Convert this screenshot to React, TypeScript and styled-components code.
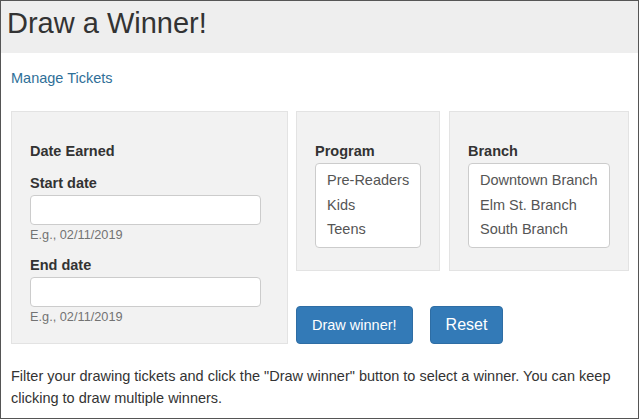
import React, { FC } from "react";
import styled, { createGlobalStyle } from "styled-components";

const GlobalStyle = createGlobalStyle`
  body {
    margin: 0;
    background: #fff;
    font-family: "Liberation Sans", Arial, sans-serif;
    color: #333;
  }
`;

const Frame = styled.div`
  box-sizing: border-box;
  width: 639px;
  height: 419px;
  border: 1px solid #555;
  overflow: hidden;
`;

const Header = styled.header`
  height: 52px;
  box-sizing: border-box;
  padding: 6px 0 0 6px;
  background: #eee;
`;

const Title = styled.h1`
  margin: 0;
  font-size: 29px;
  font-weight: normal;
  line-height: 32px;
  color: #333;
`;

const Body = styled.div`
  padding: 15px 0 0 10px;
`;

const TopLink = styled.a`
  display: block;
  font-size: 14.5px;
  line-height: 20px;
  color: #2f6f98;
  text-decoration: none;
`;

const Filters = styled.div`
  display: flex;
  align-items: flex-start;
  gap: 8px;
  margin-top: 23px;
`;

const Panel = styled.div<{ $width: number; $bottom?: number }>`
  box-sizing: border-box;
  flex-shrink: 0;
  width: ${(p) => p.$width}px;
  padding: 29px 18px ${(p) => p.$bottom ?? 22}px 18px;
  background: #f2f2f2;
  border: 1px solid #e3e3e3;
`;

const Column = styled.div`
  display: flex;
  flex-direction: column;
  gap: 35px;
`;

const PanelRow = styled.div`
  display: flex;
  gap: 9px;
`;

const Label = styled.div<{ $top?: number }>`
  font-size: 14.5px;
  font-weight: bold;
  line-height: 20px;
  margin-top: ${(p) => p.$top ?? 0}px;
  color: #333;
`;

const DateInput = styled.input`
  display: block;
  box-sizing: border-box;
  width: 231px;
  height: 30px;
  margin-top: 2px;
  background: #fff;
  border: 1px solid #ccc;
  border-radius: 4px;
`;

const Hint = styled.div`
  font-size: 12.75px;
  line-height: 16px;
  margin-top: 2px;
  color: #737373;
`;

const ListBox = styled.div<{ $width: number }>`
  box-sizing: border-box;
  width: ${(p) => p.$width}px;
  height: 85px;
  margin-top: 2px;
  padding: 4px 11px;
  background: #fff;
  border: 1px solid #ccc;
  border-radius: 4px;
`;

const Option = styled.div`
  font-size: 14.5px;
  line-height: 24.5px;
  color: #555;
  white-space: nowrap;
`;

const Buttons = styled.div`
  display: flex;
  gap: 17px;
`;

const Button = styled.button<{ $size?: number }>`
  height: 38px;
  padding: 0 15px;
  font-family: "Liberation Sans", Arial, sans-serif;
  font-size: ${(p) => p.$size ?? 14.5}px;
  color: #fff;
  background: #337ab7;
  border: 1px solid #2e6da4;
  border-radius: 4px;
`;

const Note = styled.p`
  margin: 21px 0 0 0;
  font-size: 14.5px;
  line-height: 22px;
  color: #333;
`;

const SelectList: FC<{ label: string; items: string[]; width: number; boxWidth: number }> = ({
  label,
  items,
  width,
  boxWidth,
}) => (
  <Panel $width={width}>
    <Label>{label}</Label>
    <ListBox $width={boxWidth}>
      {items.map((item) => (
        <Option key={item}>{item}</Option>
      ))}
    </ListBox>
  </Panel>
);

const App: FC = () => (
  <>
    <GlobalStyle />
    <Frame>
      <Header>
        <Title>Draw a Winner!</Title>
      </Header>
      <Body>
        <TopLink href="#">Manage Tickets</TopLink>
        <Filters>
          <Panel $width={277} $bottom={18}>
            <Label>Date Earned</Label>
            <Label $top={12}>Start date</Label>
            <DateInput />
            <Hint>E.g., 02/11/2019</Hint>
            <Label $top={12}>End date</Label>
            <DateInput />
            <Hint>E.g., 02/11/2019</Hint>
          </Panel>
          <Column>
            <PanelRow>
              <SelectList label="Program" items={["Pre-Readers", "Kids", "Teens"]} width={144} boxWidth={106} />
              <SelectList
                label="Branch"
                items={["Downtown Branch", "Elm St. Branch", "South Branch"]}
                width={180}
                boxWidth={142}
              />
            </PanelRow>
            <Buttons>
              <Button>Draw winner!</Button>
              <Button $size={16}>Reset</Button>
            </Buttons>
          </Column>
        </Filters>
        <Note>
          Filter your drawing tickets and click the "Draw winner" button to select a winner. You can keep
          clicking to draw multiple winners.
        </Note>
      </Body>
    </Frame>
  </>
);

export default App;
